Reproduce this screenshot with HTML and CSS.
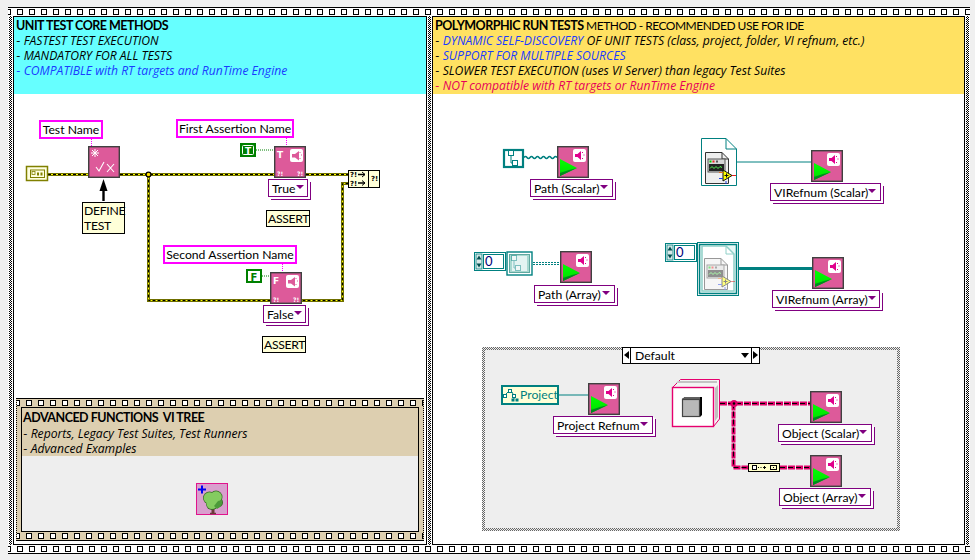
FILE: index.html
```html
<!DOCTYPE html>
<html lang="en">
<head>
<meta charset="utf-8">
<title>Unit test methods</title>
<link rel="stylesheet" href="styles.css">
</head>
<body>
<svg class="defs" width="0" height="0" aria-hidden="true">
  <defs>
    <pattern id="film" x="9" y="0" width="12" height="8" patternUnits="userSpaceOnUse">
      <rect x="0.500" y="1.500" width="5" height="5" fill="#fff" stroke="#000"/>
    </pattern>
    <linearGradient id="play" x1="0" y1="0" x2="0" y2="1">
      <stop offset="0" stop-color="#00ff00"/>
      <stop offset="0.7" stop-color="#00e800"/>
      <stop offset="1" stop-color="#00a000"/>
    </linearGradient>
    <symbol id="speaker" viewBox="0 0 13 13" width="13" height="13">
      <rect width="13" height="13" rx="2" fill="#fff"/>
      <path d="M2 5h2.500l3.500-3v9l-3.500-3h-2.500z" fill="#e0008c"/>
      <path d="M9.500 3v1M10.500 6h1M9.500 9v1" stroke="#e0008c" fill="none"/>
    </symbol>
    <symbol id="run" viewBox="0 0 32 32" width="32" height="32">
      <rect x="0.700" y="0.700" width="30.600" height="30.600" fill="#dd5a9a" stroke="#404040" stroke-width="1.400"/>
      <use href="#speaker" x="16" y="3"/>
      <polygon points="3,13 20,22 3,30" fill="url(#play)"/>
      <polygon points="3,30 20,22 12,24 3,27" fill="#008a20"/>
    </symbol>
    <symbol id="assert-base" viewBox="0 0 32 32" width="32" height="32">
      <rect x="0.700" y="0.700" width="30.600" height="30.600" fill="#dd5a9a" stroke="#404040" stroke-width="1.400"/>
      <path d="M16 5q0-2 2-2h9q2 0 2 2v9q0 2-2 2h-9q-2 0-2-2z" fill="#fff"/>
      <path d="M18 8h3l4-3v9.500l-4-3h-3z" fill="#dd5a9a"/>
      <path d="M26 6v1M27 9h1M26 12v1" stroke="#dd5a9a" fill="none"/>
      <text x="3" y="30" class="mini">?!</text>
      <text x="23" y="30" class="mini">?!</text>
    </symbol>
    <symbol id="vidoc" viewBox="0 0 36 48" width="36" height="48">
      <path d="M4.500 13.500H21L27.500 20V44.500H4.500z" fill="#eee" stroke="#333"/>
      <path d="M21 13.500V20H27.500" fill="none" stroke="#333"/>
      <rect x="7" y="20" width="17" height="13" fill="#d8d8d8" stroke="#555"/>
      <rect x="8.500" y="21.500" width="2" height="2" fill="#0c0"/>
      <rect x="11.500" y="21.500" width="2" height="2" fill="#e22"/>
      <rect x="15" y="21.500" width="2" height="2" fill="#555"/>
      <rect x="8" y="25" width="15" height="7" fill="#222"/>
      <path d="M9 29.500l2-2 2 2 2-2 2 2 2-2 2 1" stroke="#5f5" fill="none"/>
      <polygon points="22,31 31,36.500 22,42" fill="#ffff00" stroke="#111"/>
      <path d="M23.500 36.500h4M25.500 34.500v4" stroke="#111" fill="none"/>
      <path d="M31 36.500h4" stroke="#e02020"/>
      <path d="M18 33.500h4" stroke="#e07020"/>
      <path d="M18 39.500h4" stroke="#2040e0"/>
      <path d="M25 42v3" stroke="#2040e0"/>
    </symbol>
    <symbol id="treefile" viewBox="0 0 11 19" width="11" height="19">
      <rect x="1.500" y="1.500" width="5" height="5" fill="#fff" stroke="#008080"/>
      <rect x="5.500" y="11.500" width="5" height="5" fill="#fff" stroke="#008080"/>
      <path d="M4 7v7h2" fill="none" stroke="#008080"/>
    </symbol>
    <symbol id="index0" viewBox="0 0 32 19" width="32" height="19">
      <rect x="0.500" y="0.500" width="31" height="18" fill="#fff" stroke="#008080"/>
      <rect x="2" y="2" width="6" height="15" fill="#d8e8e8" stroke="#008080" stroke-width="0.800"/>
      <path d="M5 3.500l2.500 4h-5z M5 15.500l2.500-4h-5z" fill="#005050"/>
      <rect x="9.500" y="2.500" width="20" height="14" fill="#fff" stroke="#008080"/>
      <text x="11" y="14" class="zero">0</text>
    </symbol>
  </defs>
</svg>

<main class="frame">
  <svg class="strip"><rect width="100%" height="100%" fill="url(#film)"/></svg>
  <div class="panes">
    <div class="gutter"></div>

    <section class="pane pane-core">
      <header class="banner banner-cyan">
        <p class="title">UNIT TEST CORE METHODS</p>
        <p class="line">- <i>FASTEST TEST EXECUTION</i></p>
        <p class="line">- <i>MANDATORY FOR ALL TESTS</i></p>
        <p class="line blue">- <i>COMPATIBLE with RT targets and RunTime Engine</i></p>
      </header>
      <div class="canvas">
        <svg class="wires" width="412" height="450" viewBox="14 94 412 450">
          <defs>
            <path id="errwire" d="M48 174.500H88M120 174.500H274M306 174.500H348M148.500 174.500V300.500H342.500V183.500H348"/>
          </defs>
          <use href="#errwire" class="err-edge"/>
          <use href="#errwire" class="err-fill"/>
          <use href="#errwire" class="err-dash"/>
          <circle cx="148.500" cy="174.500" r="2.400" fill="#ffe000" stroke="#000" stroke-width="1.200"/>
          <path d="M91.500 139V146M286.500 138V146M282.500 264V272" class="pinkdot"/>
          <path d="M256 150H274M262 276H270" class="greendot"/>

          <rect x="26.500" y="166.500" width="21" height="14" fill="#ffffe0" stroke="#808000" stroke-width="1.500"/>
          <rect x="30.500" y="170" width="14" height="7.500" fill="none" stroke="#808000"/>
          <rect x="32" y="171.500" width="3" height="3" fill="none" stroke="#808000" stroke-width="0.800"/>
          <rect x="37" y="172.500" width="2" height="3" fill="#808000"/>
          <rect x="40.500" y="172.500" width="2" height="3" fill="#808000"/>

          <g transform="translate(88 146)">
            <rect x="0.700" y="0.700" width="30.600" height="30.600" fill="#dd5a9a" stroke="#404040" stroke-width="1.400"/>
            <path d="M7 3v8M3 7h8M4 4l6 6M10 4l-6 6" stroke="#fff" fill="none"/>
            <path d="M8 21l3 4 5-9" stroke="#fff" fill="none" stroke-width="1.100"/>
            <path d="M19 18l7 8M26 18l-7 8" stroke="#fff" fill="none" stroke-width="1.100"/>
          </g>
          <path d="M103.500 201V188" stroke="#000" stroke-width="2.400"/>
          <polygon points="103.500,179 107.500,191 99.500,191" fill="#000"/>

          <rect x="240" y="143" width="16" height="14" fill="#008000"/>
          <rect x="242.500" y="145.500" width="11" height="9" rx="1" fill="none" stroke="#fff"/>
          <text x="245" y="153.800" class="const-t">T</text>

          <use href="#assert-base" x="274" y="146"/>
          <text x="277" y="157.500" class="const-t">T</text>

          <rect x="247" y="270" width="14" height="12" fill="#fff" stroke="#008000" stroke-width="2"/>
          <text x="250.500" y="280.500" class="const-f">F</text>

          <use href="#assert-base" x="270" y="272"/>
          <text x="273" y="283.500" class="const-t">F</text>

          <rect x="348.500" y="170.500" width="31" height="17" fill="#ffffd8" stroke="#000"/>
          <path d="M368.500 170v18" stroke="#000"/>
          <text x="350" y="177" class="merge">?!</text>
          <text x="350" y="185.500" class="merge">?!</text>
          <path d="M358 174.500h7M358 183h7" stroke="#000" stroke-width="1.500"/>
          <path d="M362 172l3 2.500-3 2.500M362 180.500l3 2.500-3 2.500" stroke="#000" fill="none"/>
          <text x="371" y="181" class="merge">?!</text>
        </svg>

        <div class="name name-test">Test Name</div>
        <div class="name name-first">First Assertion Name</div>
        <div class="name name-second">Second Assertion Name</div>
        <div class="note note-define">DEFINE<br>TEST</div>
        <div class="note note-assert1">ASSERT</div>
        <div class="note note-assert2">ASSERT</div>
        <div class="ring ring-true">True<span class="caret"></span></div>
        <div class="ring ring-false">False<span class="caret"></span></div>

        <section class="adv">
          <svg class="strip"><rect width="100%" height="100%" fill="url(#film)"/></svg>
          <div class="adv-inner">
            <header class="banner banner-tan">
              <p class="title">ADVANCED FUNCTIONS&nbsp; VI TREE</p>
              <p class="line">- <i>Reports, Legacy Test Suites, Test Runners</i></p>
              <p class="line">- <i>Advanced Examples</i></p>
            </header>
            <div class="adv-body">
              <svg class="tree" width="32" height="32" viewBox="0 0 32 32">
                <rect x="0.500" y="0.500" width="31" height="31" fill="#d99fce" stroke="#e0148c"/>
                <path d="M17 22v8" stroke="#6b3a3a" stroke-width="3"/>
                <path d="M14 30.500h6" stroke="#6b3a3a" stroke-width="1.500"/>
                <g fill="#3a6a2a">
                  <circle cx="13.500" cy="15" r="6.500"/>
                  <circle cx="20" cy="14" r="6.500"/>
                  <circle cx="16" cy="21" r="6"/>
                  <circle cx="22" cy="19.500" r="5"/>
                </g>
                <g fill="#84cc60">
                  <circle cx="13.500" cy="15" r="5.800"/>
                  <circle cx="20" cy="14" r="5.800"/>
                  <circle cx="16" cy="20.500" r="5.500"/>
                </g>
                <path d="M18 23l4-5 4-1 0 4-2 3-3 2z" fill="#4c9a3a"/>
                <path d="M6 2.500v8M2 6.500h8" stroke="#0000f0" stroke-width="2" fill="none"/>
              </svg>
            </div>
          </div>
          <svg class="strip"><rect width="100%" height="100%" fill="url(#film)"/></svg>
        </section>
      </div>
    </section>

    <div class="gutter"></div>

    <section class="pane pane-run">
      <header class="banner banner-yellow">
        <p class="line line-head"><b>POLYMORPHIC RUN TESTS</b> METHOD - RECOMMENDED USE FOR IDE</p>
        <p class="line">- <i><span class="blue">DYNAMIC SELF-DISCOVERY</span> OF UNIT TESTS (class, project, folder, VI refnum, etc.)</i></p>
        <p class="line">- <i class="blue">SUPPORT FOR MULTIPLE SOURCES</i></p>
        <p class="line">- <i>SLOWER TEST EXECUTION (uses VI Server) than legacy Test Suites</i></p>
        <p class="line red">- <i>NOT compatible with RT targets or RunTime Engine</i></p>
      </header>
      <div class="canvas">
        <div class="case">
          <div class="selector">
            <span class="sel-arrow sel-prev"></span>
            <span class="sel-text">Default<span class="sel-caret"></span></span>
            <span class="sel-arrow sel-next"></span>
          </div>
        </div>

        <svg class="wires" width="532" height="450" viewBox="433 94 532 450">
          <path d="M524 157.500q1.500-2 3 0t3 0t3 0t3 0t3 0t3 0t3 0t3 0t3 0t3 0t3 0" class="teal-wave"/>
          <path d="M533 262.500h27M533 264.500h27" class="teal-dots"/>
          <path d="M737 162H811" class="teal-thin"/>
          <path d="M739 268.500H812" class="teal-thick"/>
          <path d="M559 395H588" class="teal-thin"/>

          <use href="#run" x="557" y="146"/>
          <use href="#run" x="811" y="150"/>
          <use href="#run" x="560" y="251"/>
          <use href="#run" x="812" y="257"/>
          <use href="#run" x="588" y="383"/>
          <use href="#run" x="810" y="391"/>
          <use href="#run" x="810" y="455"/>

          <rect x="504" y="150" width="19" height="17" fill="#fff" stroke="#008080" stroke-width="2.200"/>
          <use href="#treefile" x="507" y="149"/>

          <use href="#index0" x="474" y="252"/>
          <rect x="507" y="252" width="25" height="23" fill="#fff" stroke="#008080" stroke-width="1.400"/>
          <rect x="509.500" y="254.500" width="20" height="18" fill="#a8d8d0" stroke="#60a8a0"/>
          <rect x="512" y="256" width="15" height="15" fill="#e4f4f2"/>
          <g opacity="0.450"><use href="#treefile" x="510" y="254"/></g>

          <path d="M701.500 138.500H726L736.500 149V185.500H701.500z" fill="#fff" stroke="#008080"/>
          <path d="M726 138.500V149H736.500" fill="none" stroke="#008080"/>
          <use href="#vidoc" x="701" y="139"/>

          <use href="#index0" x="665" y="243"/>
          <rect x="697.500" y="242.500" width="41" height="53" fill="#fff" stroke="#008080"/>
          <rect x="699.500" y="244.500" width="37" height="49" fill="#e8f8f6" stroke="#008080" stroke-width="1.500"/>
          <path d="M702 246H726L734 254V291H702z" fill="#fff" stroke="#90d0c8" stroke-width="1.500"/>
          <path d="M726 246V254H734" fill="none" stroke="#90d0c8"/>
          <g opacity="0.500"><use href="#vidoc" x="700" y="245"/></g>

          <path d="M720 403.500H810M733.500 403.500V467.500H748M780 467.500H810" class="obj-base"/>
          <path d="M720 403.500H810M733.500 403.500V467.500H748M780 467.500H810" class="obj-dash"/>
          <circle cx="734" cy="403.500" r="3.600" fill="#e0006a"/>
          <circle cx="734" cy="403.500" r="1.200" fill="#000"/>

          <path d="M680.500 379.500H719.500V419L713.500 426.500V387.500H672.500z" fill="#f4f4f4" stroke="#e6006e"/>
          <path d="M678 381H717V383H676z" fill="#c4c4c4"/>
          <path d="M715 388l3-3v32l-3 4z" fill="#c0c0c0"/>
          <rect x="672.500" y="387.500" width="41" height="39" fill="#fff" stroke="#e6006e" stroke-width="1.400"/>
          <path d="M682 399l3-2h17v18l-2 2z" fill="#000"/>
          <path d="M682 399l3-2h15v2z" fill="#606060"/>
          <rect x="682.500" y="399.500" width="17" height="17" fill="#b8b8b8" stroke="#444" stroke-width="1.200"/>

          <rect x="748.500" y="463.500" width="31" height="8" fill="#ffffc8" stroke="#000"/>
          <rect x="752.500" y="465.500" width="4" height="4" fill="#fff" stroke="#000"/>
          <path d="M758 467.500h1M760.500 467.500h1M763 467.500h3M764.500 466v3" stroke="#000" fill="none"/>
          <rect x="770.500" y="465.500" width="6" height="4" fill="#ffffc8" stroke="#000"/>
          <rect x="773" y="467" width="1" height="1"/>
        </svg>

        <div class="project">
          <svg class="project-icon" width="16" height="14" viewBox="0 0 16 14">
            <rect x="5.500" y="1.500" width="3" height="3" fill="#fff" stroke="#008080"/>
            <rect x="0.500" y="6.500" width="3" height="3" fill="#fff" stroke="#008080"/>
            <rect x="9.500" y="6.500" width="3" height="3" fill="#fff" stroke="#008080"/>
            <rect x="12.500" y="10.500" width="3" height="3" fill="#008080"/>
            <rect x="8.500" y="10.500" width="3" height="3" fill="#008080"/>
            <path d="M5 4L3 6M9 4l1 2M11 10v1" stroke="#008080" fill="none"/>
          </svg>
          <span>Project</span>
        </div>

        <div class="ring ring-path">Path (Scalar)<span class="caret"></span></div>
        <div class="ring ring-viref">VIRefnum (Scalar)<span class="caret"></span></div>
        <div class="ring ring-patharr">Path (Array)<span class="caret"></span></div>
        <div class="ring ring-virefarr">VIRefnum (Array)<span class="caret"></span></div>
        <div class="ring ring-project">Project Refnum<span class="caret"></span></div>
        <div class="ring ring-obj">Object (Scalar)<span class="caret"></span></div>
        <div class="ring ring-objarr">Object (Array)<span class="caret"></span></div>
      </div>
    </section>

    <div class="gutter"></div>
  </div>
  <svg class="strip"><rect width="100%" height="100%" fill="url(#film)"/></svg>
</main>
</body>
</html>
```

FILE: styles.css
```css
html, body { margin: 0; padding: 0; background: #f0f0f0; }
body {
  width: 975px;
  height: 560px;
  overflow: hidden;
  font-family: Lato, "Open Sans", sans-serif;
  font-size: 12.2px;
  color: #000;
}
i { font-family: "Open Sans", sans-serif; font-size: 12.15px; letter-spacing: 0; }
p { margin: 0; }
.defs { position: absolute; }

.frame {
  margin: 7px 0 0 8px;
  width: 962px;
  height: 547px;
  box-sizing: border-box;
  background: #fff;
  border-top: 1px solid #000;
  border-bottom: 1px solid #000;
  display: flex;
  flex-direction: column;
}
.strip { display: block; width: 100%; height: 8px; flex: none; }
.panes { flex: 1; display: flex; min-height: 0; }
.gutter {
  width: 5px;
  flex: none;
  box-sizing: border-box;
  border-right: 1px solid #fff;
  border-left: 1px solid #fff;
  background: conic-gradient(#000 25%, #fff 0 50%, #000 0 75%, #fff 0) 0 0 / 2px 2px;
}
.pane {
  box-sizing: border-box;
  border: 1px solid #000;
  display: flex;
  flex-direction: column;
  background: #fff;
}
.pane-core { width: 414px; }
.pane-run { width: 533px; }

.banner { padding: 1px 2px 0; line-height: 15px; white-space: nowrap; }
.banner-cyan { background: #66ffff; height: 76px; }
.banner-yellow { background: #ffe162; height: 76px; }
.banner-tan { background: #ddcfb0; height: 46px; padding: 2px 1px 0; }
.banner-tan .title { height: 16px; }
.title, b { font-weight: 700; font-size: 12.5px; letter-spacing: -0.5px; }
.line-head { font-size: 12px; letter-spacing: -0.5px; }
.blue { color: #1a3cff; }
.red { color: #e6005a; }

.canvas { position: relative; flex: 1; display: flex; flex-direction: column; justify-content: flex-end; padding: 0 2px 3px; }
.wires { position: absolute; left: 0; top: 0; }
.mini { font: 700 6px "DejaVu Sans", sans-serif; fill: #fff; }
.const-t { font: 700 9px "DejaVu Sans", sans-serif; fill: #fff; }
.const-f { font: 700 10px "DejaVu Sans", sans-serif; fill: #008000; }
.merge { font: 700 7px "DejaVu Sans", sans-serif; fill: #000; }
.zero { font: 400 13px Lato, sans-serif; fill: #00007a; }

.err-edge { fill: none; stroke: #6f6f00; stroke-width: 3; }
.err-fill { fill: none; stroke: #ffff00; stroke-width: 1; }
.err-dash { fill: none; stroke: #000; stroke-width: 1; stroke-dasharray: 3 2; }
.pinkdot { fill: none; stroke: #ff00ff; stroke-width: 1; stroke-dasharray: 1 1; }
.greendot { fill: none; stroke: #008000; stroke-width: 1; stroke-dasharray: 1 1; }
.teal-wave { fill: none; stroke: #008080; stroke-width: 1.500; }
.teal-dots { fill: none; stroke: #008080; stroke-width: 1.200; stroke-dasharray: 2 1; }
.teal-thin { fill: none; stroke: #008080; stroke-width: 1; }
.teal-thick { fill: none; stroke: #008080; stroke-width: 3; }
.obj-base { fill: none; stroke: #e0006a; stroke-width: 4; stroke-dasharray: 7 1; }
.obj-dash { fill: none; stroke: #000; stroke-width: 1; stroke-dasharray: 5 3; }

.name {
  position: absolute;
  box-sizing: border-box;
  height: 19px;
  border: 2px solid #ff00ff;
  background: #fff;
  line-height: 15px;
  text-align: center;
  white-space: nowrap;
}
.name-test { left: 25px; top: 26px; width: 64px; }
.name-first { left: 162px; top: 25px; width: 118px; }
.name-second { left: 149px; top: 151px; width: 134px; }

.note {
  position: absolute;
  box-sizing: border-box;
  border: 1px solid #000;
  background: #ffffd8;
  padding: 0 1px;
  line-height: 15px;
  white-space: nowrap;
  letter-spacing: -0.3px;
}
.note-define { left: 68px; top: 108px; width: 43px; height: 32px; }
.note-assert1 { left: 252px; top: 116px; width: 44px; height: 17px; text-align: center; }
.note-assert2 { left: 248px; top: 242px; width: 44px; height: 17px; text-align: center; }

.ring {
  position: absolute;
  box-sizing: border-box;
  height: 18px;
  border: 1px solid #800080;
  background: #fff;
  box-shadow: 1px 1px 0 #fff, 2px 2px 0 #fff, 3px 3px 0 #800080;
  padding: 1px 3px 0;
  line-height: 16px;
  white-space: nowrap;
  display: flex;
  justify-content: space-between;
  align-items: center;
}
.caret {
  width: 0;
  height: 0;
  border-left: 4px solid transparent;
  border-right: 4px solid transparent;
  border-top: 4px solid #800080;
  margin: 0 1px 4px 0;
}
.ring-true { left: 254px; top: 85px; width: 40px; }
.ring-false { left: 249px; top: 211px; width: 43px; }
.ring-path { left: 97px; top: 85px; width: 83px; }
.ring-viref { left: 337px; top: 89px; width: 111px; }
.ring-patharr { left: 101px; top: 191px; width: 81px; }
.ring-virefarr { left: 339px; top: 196px; width: 108px; }
.ring-project { left: 120px; top: 322px; width: 100px; }
.ring-obj { left: 345px; top: 330px; width: 94px; }
.ring-objarr { left: 346px; top: 394px; width: 92px; }

.adv {
  box-sizing: border-box;
  height: 143px;
  background: #ddcfb0;
  border: 1px dotted #000;
  border-top: 1px solid #000;
  border-bottom: 1px solid #000;
  display: flex;
  flex-direction: column;
}
.adv-inner {
  flex: 1;
  margin: 0 4px;
  border: 1px solid #000;
  display: flex;
  flex-direction: column;
  background: #eee;
}
.adv-body { flex: 1; position: relative; }
.tree { position: absolute; left: 174px; top: 27px; }

.case {
  position: absolute;
  left: 49px;
  top: 253px;
  width: 418px;
  height: 184px;
  box-sizing: border-box;
  border: 3px solid transparent;
  background:
    linear-gradient(#eee, #eee) padding-box,
    conic-gradient(#666 25%, #eee 0 50%, #666 0 75%, #eee 0) 0 0 / 2px 2px border-box;
}
.selector {
  position: absolute;
  left: 137px;
  top: -3px;
  width: 138px;
  height: 17px;
  box-sizing: border-box;
  border: 1px solid #000;
  background: #fff;
  display: flex;
  line-height: 15px;
}
.sel-arrow { width: 7px; flex: none; position: relative; }
.sel-prev { border-right: 1px solid #000; }
.sel-next { border-left: 1px solid #000; }
.sel-prev::before, .sel-next::before {
  content: "";
  position: absolute;
  top: 3px;
  border-top: 4px solid transparent;
  border-bottom: 4px solid transparent;
}
.sel-prev::before { left: 1px; border-right: 5px solid #000; }
.sel-next::before { left: 1px; border-left: 5px solid #000; }
.sel-text { flex: 1; padding-left: 4px; display: flex; justify-content: space-between; align-items: center; }
.sel-caret {
  width: 0;
  height: 0;
  border-left: 4px solid transparent;
  border-right: 4px solid transparent;
  border-top: 5px solid #000;
  margin-right: 2px;
}
.project {
  position: absolute;
  left: 68px;
  top: 291px;
  width: 58px;
  height: 20px;
  box-sizing: border-box;
  border: 2px solid #008080;
  background: #ffffd8;
  color: #008080;
  display: flex;
  align-items: center;
  gap: 1px;
  line-height: 14px;
}
.project-icon { flex: none; }
```
